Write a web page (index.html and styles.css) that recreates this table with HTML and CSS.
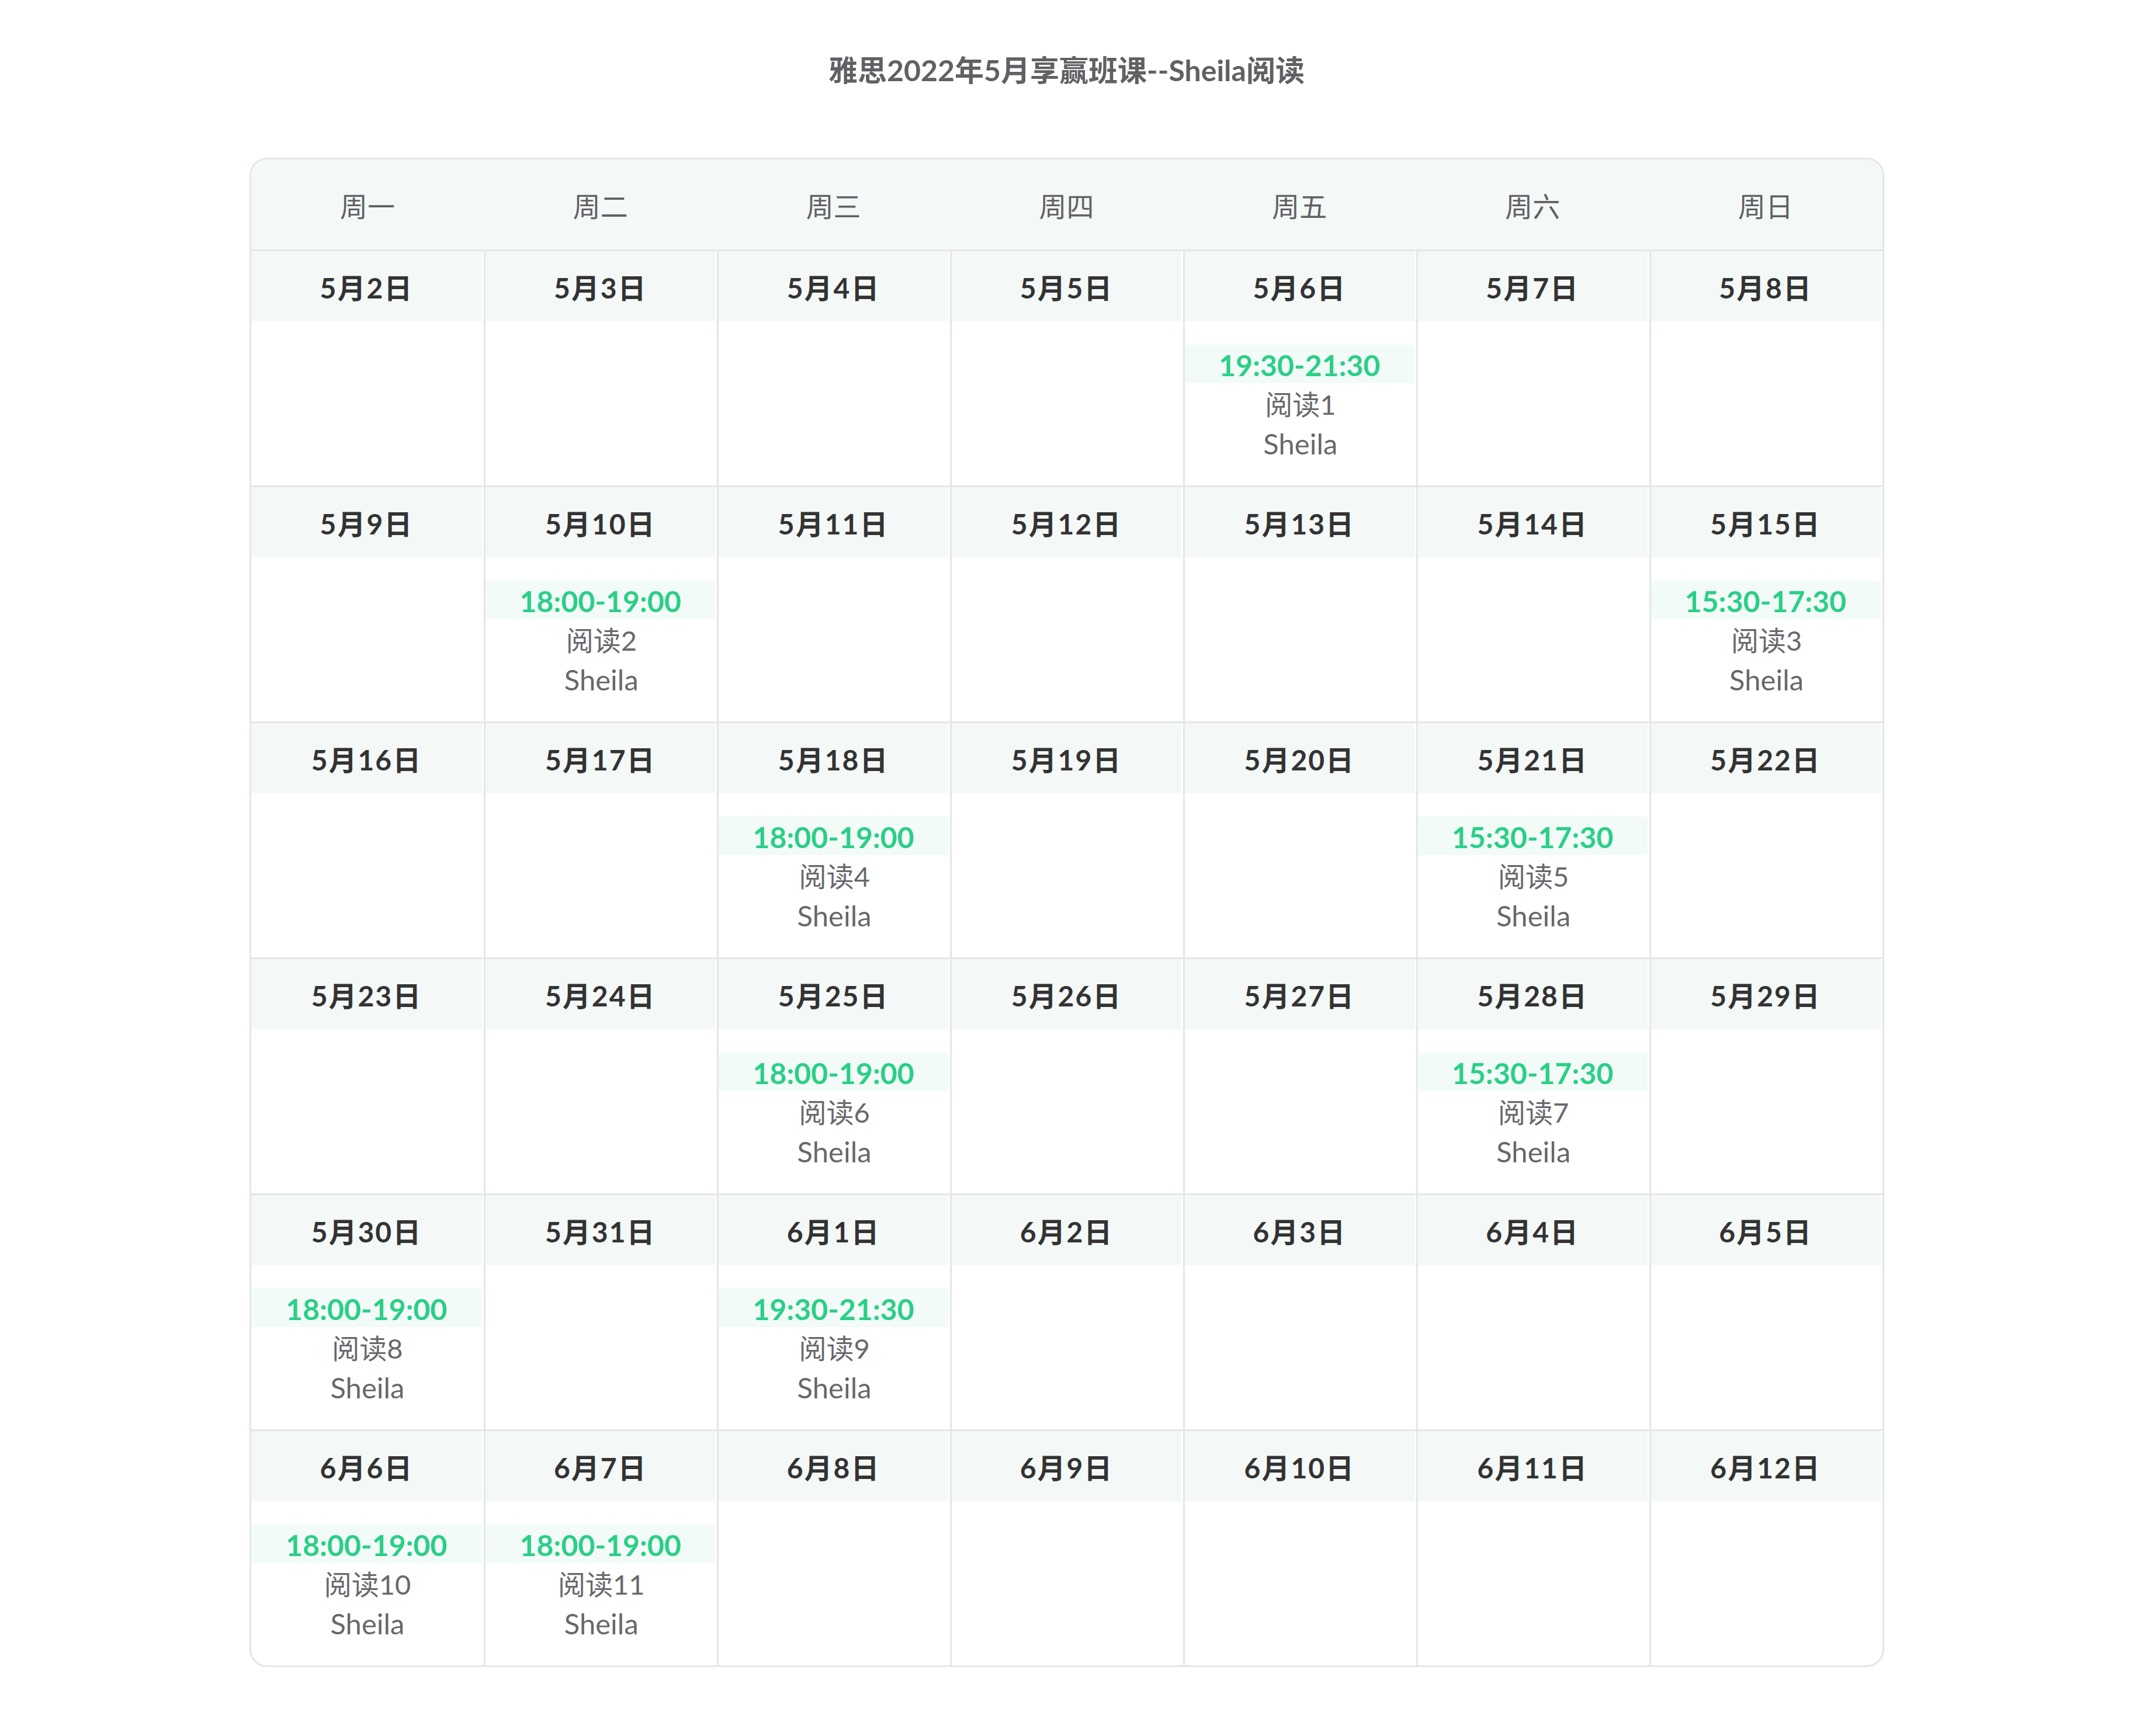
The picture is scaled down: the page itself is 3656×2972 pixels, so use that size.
FILE: index.html
```html
<!DOCTYPE html>
<html lang="zh-CN">
<head>
<meta charset="utf-8">
<title>雅思2022年5月享赢班课--Sheila阅读</title>
<link rel="stylesheet" href="styles.css">
</head>
<body>
<div class="page">
<h1 class="title">雅思2022年5月享赢班课--Sheila阅读</h1>
<div class="calendar">
  <div class="weekdays">
    <div class="weekday">周一</div>
    <div class="weekday">周二</div>
    <div class="weekday">周三</div>
    <div class="weekday">周四</div>
    <div class="weekday">周五</div>
    <div class="weekday">周六</div>
    <div class="weekday">周日</div>
  </div>

  <div class="week">
    <div class="day"><div class="date">5月2日</div><div class="events"></div></div>
    <div class="day"><div class="date">5月3日</div><div class="events"></div></div>
    <div class="day"><div class="date">5月4日</div><div class="events"></div></div>
    <div class="day"><div class="date">5月5日</div><div class="events"></div></div>
    <div class="day"><div class="date">5月6日</div><div class="events"><div class="time">19:30-21:30</div><div class="line">阅读1</div><div class="line teacher">Sheila</div></div></div>
    <div class="day"><div class="date">5月7日</div><div class="events"></div></div>
    <div class="day"><div class="date">5月8日</div><div class="events"></div></div>
  </div>

  <div class="week">
    <div class="day"><div class="date">5月9日</div><div class="events"></div></div>
    <div class="day"><div class="date">5月10日</div><div class="events"><div class="time">18:00-19:00</div><div class="line">阅读2</div><div class="line teacher">Sheila</div></div></div>
    <div class="day"><div class="date">5月11日</div><div class="events"></div></div>
    <div class="day"><div class="date">5月12日</div><div class="events"></div></div>
    <div class="day"><div class="date">5月13日</div><div class="events"></div></div>
    <div class="day"><div class="date">5月14日</div><div class="events"></div></div>
    <div class="day"><div class="date">5月15日</div><div class="events"><div class="time">15:30-17:30</div><div class="line">阅读3</div><div class="line teacher">Sheila</div></div></div>
  </div>

  <div class="week">
    <div class="day"><div class="date">5月16日</div><div class="events"></div></div>
    <div class="day"><div class="date">5月17日</div><div class="events"></div></div>
    <div class="day"><div class="date">5月18日</div><div class="events"><div class="time">18:00-19:00</div><div class="line">阅读4</div><div class="line teacher">Sheila</div></div></div>
    <div class="day"><div class="date">5月19日</div><div class="events"></div></div>
    <div class="day"><div class="date">5月20日</div><div class="events"></div></div>
    <div class="day"><div class="date">5月21日</div><div class="events"><div class="time">15:30-17:30</div><div class="line">阅读5</div><div class="line teacher">Sheila</div></div></div>
    <div class="day"><div class="date">5月22日</div><div class="events"></div></div>
  </div>

  <div class="week">
    <div class="day"><div class="date">5月23日</div><div class="events"></div></div>
    <div class="day"><div class="date">5月24日</div><div class="events"></div></div>
    <div class="day"><div class="date">5月25日</div><div class="events"><div class="time">18:00-19:00</div><div class="line">阅读6</div><div class="line teacher">Sheila</div></div></div>
    <div class="day"><div class="date">5月26日</div><div class="events"></div></div>
    <div class="day"><div class="date">5月27日</div><div class="events"></div></div>
    <div class="day"><div class="date">5月28日</div><div class="events"><div class="time">15:30-17:30</div><div class="line">阅读7</div><div class="line teacher">Sheila</div></div></div>
    <div class="day"><div class="date">5月29日</div><div class="events"></div></div>
  </div>

  <div class="week">
    <div class="day"><div class="date">5月30日</div><div class="events"><div class="time">18:00-19:00</div><div class="line">阅读8</div><div class="line teacher">Sheila</div></div></div>
    <div class="day"><div class="date">5月31日</div><div class="events"></div></div>
    <div class="day"><div class="date">6月1日</div><div class="events"><div class="time">19:30-21:30</div><div class="line">阅读9</div><div class="line teacher">Sheila</div></div></div>
    <div class="day"><div class="date">6月2日</div><div class="events"></div></div>
    <div class="day"><div class="date">6月3日</div><div class="events"></div></div>
    <div class="day"><div class="date">6月4日</div><div class="events"></div></div>
    <div class="day"><div class="date">6月5日</div><div class="events"></div></div>
  </div>

  <div class="week">
    <div class="day"><div class="date">6月6日</div><div class="events"><div class="time">18:00-19:00</div><div class="line">阅读10</div><div class="line teacher">Sheila</div></div></div>
    <div class="day"><div class="date">6月7日</div><div class="events"><div class="time">18:00-19:00</div><div class="line">阅读11</div><div class="line teacher">Sheila</div></div></div>
    <div class="day"><div class="date">6月8日</div><div class="events"></div></div>
    <div class="day"><div class="date">6月9日</div><div class="events"></div></div>
    <div class="day"><div class="date">6月10日</div><div class="events"></div></div>
    <div class="day"><div class="date">6月11日</div><div class="events"></div></div>
    <div class="day"><div class="date">6月12日</div><div class="events"></div></div>
  </div>
</div>
</div>
</body>
</html>
```

FILE: styles.css
```css
html, body {
  margin: 0;
  padding: 0;
  background: #ffffff;
}

body {
  font-family: "Lato", "Noto Sans CJK SC", sans-serif;
  color: #666666;
}

.page {
  padding: 85px 5px 100px 0;
}

.title {
  margin: 0 0 115px 0;
  text-align: center;
  font-size: 50px;
  line-height: 70px;
  font-weight: 700;
  color: #616165;
}

.calendar {
  box-sizing: border-box;
  width: 2798px;
  margin: 0 auto;
  border: 3px solid #e6e6e6;
  border-radius: 30px;
  overflow: hidden;
  background: #ffffff;
}

.weekdays {
  display: grid;
  grid-template-columns: repeat(7, 1fr);
  height: 154px;
  background: #f4f8f7;
}

.weekday {
  display: flex;
  align-items: center;
  justify-content: center;
  font-size: 47px;
  color: #616165;
}

.week {
  display: grid;
  grid-template-columns: repeat(7, 1fr);
  border-top: 3px solid #e6e6e6;
}

.day {
  display: flex;
  flex-direction: column;
  border-left: 3px solid #e6e6e6;
  min-width: 0;
}

.day:first-child {
  border-left: none;
}

.date {
  height: 120px;
  margin-right: 3px;
  display: flex;
  align-items: center;
  justify-content: center;
  background: #f4f8f7;
  font-size: 48px;
  font-weight: 700;
  letter-spacing: 2px;
  color: #333333;
}

.events {
  box-sizing: border-box;
  height: 281px;
  padding-top: 40px;
  text-align: center;
}

.time {
  margin-right: 3px;
  height: 66px;
  line-height: 70px;
  background: #f2fbf7;
  color: #2bcf87;
  font-size: 50px;
  font-weight: 700;
}

.line {
  height: 66px;
  line-height: 72px;
  font-size: 47px;
  color: #68686c;
}

.teacher {
  font-size: 49px;
  line-height: 74px;
}
```
